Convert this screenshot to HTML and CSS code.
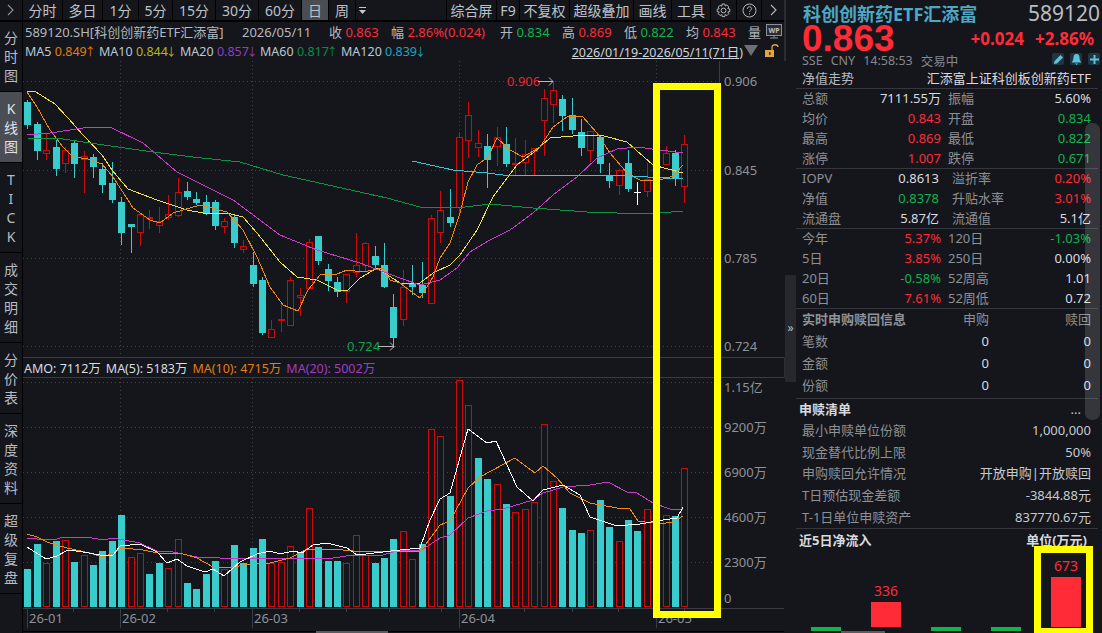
FILE: index.html
```html
<!DOCTYPE html>
<html>
  <head>
    <meta charset="utf-8">
    <title>589120</title>
    <link rel="stylesheet" href="styles.css">
    <script src="chart.js" defer></script>
  </head>
  <body>
    <div id="screen">
      <div id="left">
        <div id="toolbar">
          <div class="tool tool-arrow">
            <svg width="10" height="14" viewBox="0 0 10 14"><path d="M2 2l5 5-5 5" fill="none" stroke="#8a8d94" stroke-width="1.2"/></svg>
          </div>
          <div class="tool w40">分时</div>
          <div class="tool w40">多日</div>
          <div class="tool w36">1分</div>
          <div class="tool w34">5分</div>
          <div class="tool w43">15分</div>
          <div class="tool w43">30分</div>
          <div class="tool w43">60分</div>
          <div class="tool w27 on">日</div>
          <div class="tool w27">周</div>
          <div class="tool w13">
            <svg width="7" height="7" viewBox="0 0 7 7"><path d="M0 3h7L3.500 7z" fill="#c8c8c8"/><path d="M0 .5h7" stroke="#c8c8c8"/></svg>
          </div>
          <div class="tool-space"></div>
          <div class="tool w50">综合屏</div>
          <div class="tool w23">F9</div>
          <div class="tool w50">不复权</div>
          <div class="tool w64">超级叠加</div>
          <div class="tool w38">画线</div>
          <div class="tool w39">工具</div>
          <div class="tool w26">
            <svg width="15" height="15" viewBox="0 0 15 15"><circle cx="7.500" cy="7.500" r="2.400" fill="none" stroke="#b8b8b8"/><path d="M6.200 1h2.600l.4 2 1.700-1 1.900 1.900-1 1.700 2 .4v2.600l-2 .4 1 1.700-1.900 1.900-1.700-1-.4 2H6.200l-.4-2-1.700 1-1.900-1.900 1-1.700-2-.4V6.200l2-.4-1-1.700L4.100 2.200l1.700 1z" fill="none" stroke="#b8b8b8"/></svg>
          </div>
          <div class="tool w25">
            <svg width="15" height="15" viewBox="0 0 15 15"><circle cx="7.500" cy="7.500" r="6.500" fill="none" stroke="#b8b8b8"/><path d="M5.400 5.800c0-1.300 1-2 2.100-2s2.100.7 2.100 1.900c0 1.500-2.100 1.600-2.100 3.200" fill="none" stroke="#b8b8b8"/><path d="M7.500 10.300v1.200" stroke="#b8b8b8"/></svg>
          </div>
          <div class="tool w22">
            <svg width="8" height="12" viewBox="0 0 8 12"><path d="M2 1l5 5-5 5" fill="none" stroke="#b8b8b8" stroke-width="1.100"/></svg>
          </div>
        </div>
        <div id="main">
          <div id="tabs">
            <div class="tab h70">分<br>时<br>图</div>
            <div class="tab h71 on">K<br>线<br>图</div>
            <div class="tab h90">T<br>I<br>C<br>K</div>
            <div class="tab h90">成<br>交<br>明<br>细</div>
            <div class="tab h71">分<br>价<br>表</div>
            <div class="tab h90">深<br>度<br>资<br>料</div>
            <div class="tab h90">超<br>级<br>复<br>盘</div>
          </div>
          <div id="charts">
            <div class="quote">
              <span class="name">589120.SH[科创创新药ETF汇添富]</span>
              <span class="date">2026/05/11</span>
              <span class="q">收 <b class="red">0.863</b></span>
              <span class="q q-wide">幅 <b class="red">2.86%(0.024)</b></span>
              <span class="q">开 <b class="green">0.834</b></span>
              <span class="q">高 <b class="red">0.869</b></span>
              <span class="q">低 <b class="green">0.822</b></span>
              <span class="q">均 <b class="red">0.843</b></span>
              <span class="q q-last">量</span>
              <svg class="wp" width="16" height="16" viewBox="0 0 16 16">
                <rect x=".5" y=".5" width="15" height="11" fill="#2a2c31" stroke="#8d9096"/>
                <text x="8" y="8.500" text-anchor="middle" class="wp-text">WP</text>
                <path d="M4 14h8M8 12v2" stroke="#8d9096"/>
              </svg>
            </div>
            <div class="malist">
              <span class="ma ma-5">MA5 <b class="m5">0.849<i>↑</i></b></span>
              <span class="ma ma-10">MA10 <b class="m10">0.844<i>↓</i></b></span>
              <span class="ma ma-20">MA20 <b class="m20">0.857<i>↓</i></b></span>
              <span class="ma ma-60">MA60 <b class="m60">0.817<i>↑</i></b></span>
              <span class="ma">MA120 <b class="m120">0.839<i>↓</i></b></span>
              <span class="range">2026/01/19-2026/05/11(71日)</span>
              <svg width="14" height="12" viewBox="0 0 14 12"><path d="M0 0h14L7 11z" fill="#6c6f75"/></svg>
              <svg class="lock" width="16" height="14" viewBox="0 0 16 14"><rect x="1" y="6" width="9" height="7" fill="#e3a63c"/><rect x="5" y="8" width="1.500" height="3" fill="#333"/><path d="M8 6V3c0-3 6-3 6 0" fill="none" stroke="#e3a63c" stroke-width="1.300"/></svg>
            </div>
            <svg id="kline" width="763" height="296" viewBox="23 61 763 296"></svg>
            <div class="amo">
              <span>AMO: 7112万</span>
              <span>MA(5): 5183万</span>
              <span class="m5">MA(10): 4715万</span>
              <span class="m20a">MA(20): 5002万</span>
            </div>
            <svg id="volume" width="763" height="255" viewBox="23 378 763 255"></svg>
          </div>
        </div>
      </div>

      <div id="right">
        <div class="title-row">
          <span class="title">科创创新药ETF汇添富</span>
          <span class="code">589120</span>
        </div>
        <div class="price-row">
          <span class="price">0.863</span>
          <span class="change">+0.024</span>
          <span class="change">+2.86%</span>
        </div>
        <div class="status-row">
          <span>SSE</span><span>CNY</span><span>14:58:53</span><span>交易中</span>
          <div class="btns">
            <div class="btn"><svg width="11" height="11" viewBox="0 0 11 11"><path d="M1 10l.6-3L7.500 1l2.500 2.500L4 9.400z" fill="#5fc0de"/></svg></div>
            <div class="btn"><svg width="11" height="11" viewBox="0 0 11 11"><path d="M5.500 0C3 0 2.500 2 2.500 4S1 7.500 .8 8.500h9.400C10 7.500 8.500 6 8.500 4S8 0 5.500 0zM4 9.500h3L5.500 11z" fill="#5fc0de"/></svg></div>
            <div class="btn"><svg width="11" height="11" viewBox="0 0 11 11"><path d="M5.500 1v9M1 5.500h9" stroke="#5fc0de" stroke-width="2"/></svg></div>
          </div>
        </div>

        <div class="head-row"><span>净值走势</span><span class="white">汇添富上证科创板创新药ETF</span></div>

        <div class="stats">
          <span>总额</span><b class="white">7111.55万</b><span>振幅</span><b class="white">5.60%</b>
          <span>均价</span><b class="red">0.843</b><span>开盘</span><b class="green">0.834</b>
          <span>最高</span><b class="red">0.869</b><span>最低</span><b class="green">0.822</b>
          <span>涨停</span><b class="red">1.007</b><span>跌停</span><b class="green">0.671</b>
        </div>
        <div class="stats stats-iopv">
          <span>IOPV</span><b class="white">0.8613</b><span>溢折率</span><b class="red">0.20%</b>
          <span>净值</span><b class="green">0.8378</b><span>升贴水率</span><b class="red">3.01%</b>
          <span>流通盘</span><b class="white">5.87亿</b><span>流通值</span><b class="white">5.1亿</b>
        </div>
        <div class="stats">
          <span>今年</span><b class="red">5.37%</b><span>120日</span><b class="green">-1.03%</b>
          <span>5日</span><b class="red">3.85%</b><span>250日</span><b class="white">0.00%</b>
          <span>20日</span><b class="green">-0.58%</b><span>52周高</span><b class="white">1.01</b>
          <span>60日</span><b class="red">7.61%</b><span>52周低</span><b class="white">0.72</b>
        </div>

        <div class="realtime">
          <strong>实时申购赎回信息</strong><span>申购</span><span>赎回</span>
          <span class="lbl">笔数</span><b class="white">0</b><b class="white">0</b>
          <span class="lbl">金额</span><b class="white">0</b><b class="white">0</b>
          <span class="lbl">份额</span><b class="white">0</b><b class="white">0</b>
        </div>

        <div class="list">
          <div class="list-head"><strong>申赎清单</strong><span>...</span></div>
          <div class="list-row"><span>最小申赎单位份额</span><b>1,000,000</b></div>
          <div class="list-row"><span>现金替代比例上限</span><b>50%</b></div>
          <div class="list-row"><span>申购赎回允许情况</span><b>开放申购|开放赎回</b></div>
          <div class="list-row"><span>T日预估现金差额</span><b>-3844.88元</b></div>
          <div class="list-row"><span>T-1日单位申赎资产</span><b>837770.67元</b></div>
        </div>

        <div class="flow-head"><strong>近5日净流入</strong><strong>单位(万元)</strong></div>
        <div class="flow">
          <div class="flow-col"><div class="down"></div></div>
          <div class="flow-col"><span>336</span><div class="up up336"></div><div class="gap4"></div></div>
          <div class="flow-col"><div class="down"></div></div>
          <div class="flow-col"><div class="down"></div></div>
          <div class="flow-col"><span>673</span><div class="up up673"></div><div class="gap4"></div></div>
        </div>
        <div class="hscroll"></div>
        <div class="vscroll"></div>
        <div class="handle">»</div>
      </div>

      <div class="frame frame-a"></div>
      <div class="frame frame-b"></div>
    </div>
  </body>
</html>
```

FILE: styles.css
```css
* {
    box-sizing: border-box;
}
html, body {
    margin: 0;
    padding: 0;
    background: #14161c;
}
body {
    font-family: "Noto Sans", "Noto Sans CJK SC", sans-serif;
    font-size: 13px;
    color: #b4b8be;
}
b {
    font-weight: normal;
}
i {
    font-style: normal;
}
svg {
    display: block;
}
#screen {
    position: relative;
    display: flex;
    width: 1102px;
    height: 633px;
    overflow: hidden;
}
#left {
    width: 786px;
    flex: none;
    border-right: 2px solid #2b2d32;
}
#toolbar {
    display: flex;
    height: 22px;
    border-bottom: 2px solid #000;
}
.tool {
    display: flex;
    align-items: center;
    justify-content: center;
    height: 20px;
    border-right: 1px solid #000;
    font-size: 14px;
    color: #bcc2ca;
}
.tool.on {
    background: #4b4d55;
}
.tool-arrow {
    width: 23px;
}
.tool-space {
    flex: 1;
    border-right: 1px solid #000;
}
.w13 { width: 13px; border-right: 0; }
.w22 { width: 22px; border-right: 0; }
.w23 { width: 23px; }
.w25 { width: 25px; }
.w26 { width: 26px; }
.w27 { width: 27px; }
.w34 { width: 34px; }
.w36 { width: 36px; }
.w38 { width: 38px; }
.w39 { width: 39px; }
.w40 { width: 40px; }
.w43 { width: 43px; }
.w50 { width: 50px; }
.w64 { width: 64px; }
#main {
    display: flex;
}
#tabs {
    width: 23px;
    flex: none;
    height: 611px;
    border-right: 1px solid #000;
}
.tab {
    display: flex;
    align-items: center;
    justify-content: center;
    text-align: center;
    line-height: 19px;
    font-size: 14px;
    border-bottom: 1px solid #000;
    color: #b8bcc2;
}
.tab.on {
    background: #4b4d55;
    color: #dfe2e6;
}
.h70 { height: 70px; }
.h71 { height: 71px; }
.h90 { height: 90px; }
#charts {
    width: 761px;
}
.quote {
    display: flex;
    align-items: center;
    height: 19px;
    padding-left: 2px;
    white-space: nowrap;
}
.name {
    width: 217px;
}
.date {
    width: 87px;
}
.q {
    width: 62px;
}
.q-wide {
    width: 109px;
}
.q-last {
    width: 18px;
}
.red {
    color: #ff2b37;
}
.green {
    color: #12b34c;
}
.white {
    color: #d8dce0;
}
.wp-text {
    font-size: 7px;
    font-weight: bold;
    fill: #c0c0c0;
}
.malist {
    display: flex;
    align-items: center;
    gap: 6px;
    height: 20px;
    padding-left: 2px;
    font-size: 12.500px;
    white-space: nowrap;
    color: #bac8d4;
}
.ma {
    flex: none;
}
.ma i {
    margin-left: -2px;
    font-size: 11px;
}
.ma-5 { width: 68px; }
.ma-10 { width: 75px; }
.ma-20 { width: 74px; }
.ma-60 { width: 75px; }
.range {
    margin-left: auto;
    margin-right: -5px;
    color: #d0d4d8;
    text-decoration: underline;
    font-size: 12.500px;
}
.lock {
    margin: 0 4px 0 0;
}
.m5 { color: #e67c0e; }
.m10 { color: #b7b41e; }
.m20 { color: #8f3fc0; }
.m20a { color: #a13cc4; }
.m60 { color: #0f8a45; }
.m120 { color: #1ea5c4; }
#kline, #volume {
    background: #14161c;
}
#kline polyline, #volume polyline {
    shape-rendering: crispEdges;
}
.amo {
    display: flex;
    gap: 5px;
    align-items: center;
    height: 21px;
    padding-left: 1px;
    font-size: 12.500px;
    color: #d4dce4;
    border-top: 1px solid #3a3c41;
    border-bottom: 1px solid #3a3c41;
    white-space: nowrap;
}
.axis-text {
    font-size: 13px;
    fill: #8e9196;
}
.mark-text {
    font-size: 13px;
}

#right {
    position: relative;
    flex: 1;
    padding: 0 0 0 10px;
}
.title-row {
    display: flex;
    justify-content: space-between;
    align-items: center;
    height: 26px;
    padding: 0 5px 0 7px;
}
.title {
    font-size: 18px;
    font-weight: bold;
    color: #4da8c4;
}
.code {
    font-size: 21px;
    color: #b9bcc0;
}
.price-row {
    display: flex;
    align-items: center;
    height: 25px;
    padding-left: 6px;
    color: #ff2b37;
}
.price {
    font-family: "Liberation Sans", sans-serif;
    font-size: 37px;
    font-weight: bold;
    line-height: 25px;
    margin-right: 76px;
}
.change {
    font-size: 17px;
    font-weight: bold;
    margin-right: 11px;
}
.status-row {
    display: flex;
    align-items: center;
    gap: 8px;
    height: 18px;
    padding-left: 6px;
    font-size: 12.500px;
    color: #85888e;
}
.btns {
    display: flex;
    gap: 6px;
    margin-left: auto;
    margin-right: 5px;
    padding-bottom: 2px;
}
.btn {
    display: flex;
    align-items: center;
    justify-content: center;
    width: 12px;
    height: 12px;
    background: #1d3641;
    border-radius: 2px;
}
.head-row {
    display: flex;
    justify-content: space-between;
    align-items: center;
    width: 302px;
    height: 20px;
    padding: 0 7px 0 6px;
    border-bottom: 1px solid #34363b;
}
.head-row span, .stats > *, .realtime > *, .list-row > *, .list-head > *, .flow-head > * {
    line-height: 16px;
    padding-bottom: 2px;
}
.stats {
    display: grid;
    grid-template-columns: 68px 71px 72px 78px;
    grid-auto-rows: 20px;
    align-items: center;
    width: 302px;
    height: 80px;
    padding: 0 7px 0 6px;
    border-bottom: 1px solid #34363b;
    color: #8d9095;
}
.stats b {
    text-align: right;
}
.stats span:nth-child(4n+3) {
    padding-left: 7px;
}
.stats-iopv {
    grid-template-columns: 68px 69px 76px 76px;
    height: 60px;
}
.stats-iopv span:nth-child(4n+3) {
    padding-left: 13px;
}
.realtime {
    display: grid;
    grid-template-columns: 140px 47px 102px;
    grid-auto-rows: 22px;
    align-items: center;
    width: 302px;
    height: 90px;
    padding: 0 7px 0 6px;
    border-bottom: 1px solid #34363b;
    text-align: right;
    color: #8d9095;
    white-space: nowrap;
}
.realtime strong {
    text-align: left;
    font-weight: bold;
    color: #8f9297;
}
.realtime .lbl {
    text-align: left;
}
.list {
    width: 302px;
    height: 130px;
    padding: 0 7px 0 3px;
    border-bottom: 1px solid #34363b;
    color: #8d9095;
}
.list-head {
    display: flex;
    justify-content: space-between;
    align-items: center;
    height: 21px;
    padding-right: 10px;
}
.list-head strong, .flow-head strong {
    color: #d8dade;
    font-weight: bold;
}
.list-head span {
    color: #c0c0c0;
}
.list-row {
    display: flex;
    justify-content: space-between;
    align-items: center;
    height: 21.800px;
    padding-left: 3px;
}
.list-row b {
    color: #c6cad0;
}
.flow-head {
    display: flex;
    justify-content: space-between;
    align-items: center;
    width: 302px;
    height: 24px;
    padding: 0 11px 0 3px;
}
.flow {
    display: flex;
    width: 300px;
    height: 78px;
}
.flow-col {
    flex: 1;
    display: flex;
    flex-direction: column;
    justify-content: flex-end;
    align-items: center;
    font-size: 14px;
    color: #ff2b37;
}
.flow-col span {
    line-height: 18px;
    margin-bottom: 2px;
}
.down {
    width: 30px;
    height: 4px;
    background: #12b34c;
}
.up {
    width: 30px;
    background: #ff2b37;
}
.up336 { height: 25px; }
.up673 { height: 50px; }
.gap4 { height: 4px; }
.hscroll {
    position: absolute;
    left: 55px;
    bottom: 0;
    width: 44px;
    height: 2px;
    background: #5a5c62;
}
.vscroll {
    position: absolute;
    left: 299px;
    top: 123px;
    width: 15px;
    height: 297px;
    border-radius: 7px;
    background: rgba(255, 255, 255, .14);
}
.handle {
    position: absolute;
    left: -1px;
    top: 275px;
    width: 11px;
    height: 107px;
    background: #26282d;
    color: #b8bcc2;
    font-size: 12px;
    line-height: 105px;
    text-align: center;
}
.frame {
    position: absolute;
    border: 7px solid #ffff00;
}
.frame-a {
    left: 653px;
    top: 83px;
    width: 68px;
    height: 535px;
}
.frame-b {
    left: 1034px;
    top: 546px;
    width: 59px;
    height: 87px;
    border-bottom-width: 5px;
}
```

FILE: chart.js
```js
var SVG_NS = 'http://www.w3.org/2000/svg';
var BG = '#14161c';
var RED = '#cf0a0a';
var TEAL = '#39cccc';
var GRID = '#3f4248';

// colour, wick top, body top, body bottom, wick bottom (page y)
var candles = [
  ['t',100,102,125,129],['t',122,124,151,160],['r',133,150,153,160],['t',140,147,169,176],
  ['r',147,150,163,173],['t',141,143,164,178],['r',151,156,159,193],['t',154,157,167,178],
  ['t',163,169,185,193],['t',162,183,200,203],['t',197,202,233,245],['t',224,224,227,253],
  ['r',214,214,232,246],['r',210,217,218,229],['r',207,221,225,233],['r',195,214,217,220],
  ['r',178,192,215,217],['t',182,191,197,200],['t',192,199,203,205],['t',195,202,214,215],
  ['t',200,202,226,230],['r',218,221,226,233],['t',215,217,243,248],['r',240,246,249,253],
  ['t',252,265,284,287],['t',277,280,333,335],['r',320,329,337,337],['r',303,319,320,332],
  ['r',277,280,325,325],['r',288,295,297,316],['r',239,242,288,288],['t',236,236,261,265],
  ['t',264,269,281,291],['t',277,282,292,297],['r',274,274,291,303],['r',233,265,272,277],
  ['r',242,243,265,271],['t',246,256,265,270],['t',243,265,287,288],['t',294,307,338,348],
  ['r',270,287,319,326],['t',265,284,287,295],['t',262,285,293,298],['r',215,218,303,303],
  ['r',191,210,232,243],['t',189,217,223,227],['r',132,137,207,215],['r',102,115,140,158],
  ['r',130,143,147,157],['t',134,146,160,188],['r',127,137,146,166],['t',127,144,164,167],
  ['r',138,163,164,175],['r',140,154,162,175],['r',148,148,151,175],['r',89,98,120,156],
  ['r',82,90,104,123],['t',95,99,116,131],['t',98,115,130,134],['t',119,132,148,156],
  ['r',131,131,150,162],['t',135,137,164,173],['t',163,175,181,188],['r',169,170,185,195],
  ['t',150,163,189,192],['w',182,192,192,205],['r',163,179,191,197],['r',165,175,180,190],
  ['r',146,153,164,164],['t',150,153,179,186],['r',135,144,186,203]
];

// colour and page y of the top of each volume bar
var bars = [
  ['t',569],['t',544],['r',563],['t',541],['r',540],['t',562],['r',555],['t',565],['t',551],['t',541],
  ['t',515],['r',557],['r',553],['t',574],['t',563],['r',568],['r',539],['t',583],['t',589],['t',574],
  ['t',561],['r',569],['t',545],['t',563],['t',548],['t',539],['r',563],['r',562],['r',546],['t',553],
  ['r',508],['t',547],['t',561],['t',561],['r',563],['r',535],['r',555],['t',563],['t',558],['t',539],
  ['r',531],['r',559],['t',544],['r',429],['r',436],['t',496],['r',380],['r',405],['t',458],['t',479],
  ['r',484],['t',504],['r',512],['r',509],['r',502],['r',424],['r',481],['t',508],['t',530],['t',533],
  ['r',530],['t',500],['t',527],['r',541],['t',520],['t',531],['r',509],['r',515],['r',515],['t',516],
  ['r',468]
];

var kLines = [
  ['#f0e050', '27,91 36,92 55,104 68,118 83,135 102,155 112,170 128,189 157,200 187,210 203,213 227,213 243,217 257,233 280,262 297,277 317,280 337,290 347,291 360,278 377,268 400,283 420,283 433,273 450,265 460,255 477,230 493,197 517,165 533,153 550,138 573,136 600,135 627,142 653,165 683,173'],
  ['#f08a14', '27,92 37,107 50,130 63,147 73,157 88,159 102,164 113,177 128,200 133,208 150,220 160,223 173,213 200,205 227,212 243,230 257,257 270,287 283,305 298,311 308,290 320,275 337,274 347,270 363,272 383,268 390,280 400,283 420,298 433,277 440,258 450,243 460,213 468,182 477,165 488,157 497,138 510,150 523,157 540,147 553,127 567,117 582,116 597,133 610,153 627,173 640,180 660,180 673,176 683,165'],
  ['#c83cc8', '27,135 50,133 83,128 110,127 143,143 177,172 233,200 280,235 317,250 360,263 400,278 420,285 440,280 457,268 470,252 490,240 510,230 533,213 553,195 577,177 597,158 617,149 637,147 683,153'],
  ['#0e9440', '27,138 63,139 90,143 153,152 193,157 240,162 283,175 387,198 420,207 457,208 490,204 533,208 587,212 647,214 683,211'],
  ['#35c6d8', '412,161 453,170 487,173 503,175 613,175 683,179']
];

var volLines = [
  ['#c83cc8', '27,538 37,539 57,539 63,537 87,537 103,540 113,538 140,543 157,551 173,552 197,557 220,558 300,558 333,558 353,555 383,555 400,550 420,551 440,538 450,535 468,518 487,511 503,509 533,500 543,493 563,487 590,485 608,482 627,492 637,493 653,503 670,509 683,510'],
  ['#f08a14', '27,534 37,537 47,542 67,548 90,553 103,557 113,553 122,548 143,550 163,554 180,553 197,558 213,567 233,567 250,564 270,563 290,558 307,549 333,549 353,551 400,551 420,552 440,525 450,521 468,488 480,477 515,458 535,473 543,466 557,478 570,493 590,503 617,508 630,509 638,521 660,524 673,522 683,516'],
  ['#ffffff', '27,547 46,559 57,556 68,550 83,552 100,555 113,555 120,546 140,544 157,552 167,563 177,559 187,566 205,572 213,569 224,576 240,562 257,554 270,551 280,554 293,551 302,553 313,545 327,543 347,548 357,555 400,550 420,548 430,520 440,499 450,493 468,429 487,443 496,441 517,487 533,501 543,490 563,485 580,495 590,517 617,526 640,524 663,520 677,518 683,507']
];

function el(parent, name, attrs, txt) {
  var node = document.createElementNS(SVG_NS, name);
  for (var k in attrs) node.setAttribute(k, attrs[k]);
  if (txt) node.textContent = txt;
  parent.appendChild(node);
  return node;
}

function xAt(i) {
  return Math.round(27.4 + 9.384 * i);
}

function hline(svg, y, x1, x2, color, dash) {
  el(svg, 'line', {x1: x1, x2: x2, y1: y + .5, y2: y + .5, stroke: color, 'stroke-dasharray': dash || ''});
}

function vline(svg, x, y1, y2, color, dash) {
  el(svg, 'line', {x1: x + .5, x2: x + .5, y1: y1, y2: y2, stroke: color, 'stroke-dasharray': dash || ''});
}

function drawLines(svg, list) {
  list.forEach(function (l) {
    el(svg, 'polyline', {points: l[1], fill: 'none', stroke: l[0], 'stroke-width': 1});
  });
}

function drawKline(svg) {
  [81, 170, 258, 346].forEach(function (y) { hline(svg, y, 23, 719, GRID, '1 3'); });
  [120, 252, 459, 656].forEach(function (x) { vline(svg, x, 61, 357, GRID, '1 3'); });
  vline(svg, 719, 61, 357, '#3a3c41');

  candles.forEach(function (c, i) {
    var x = xAt(i);
    var color = c[0] == 'r' ? RED : c[0] == 't' ? TEAL : '#ffffff';
    vline(svg, x, c[1], c[4], color);
    if (c[0] == 't') {
      el(svg, 'rect', {x: x - 3, y: c[2], width: 7, height: c[3] - c[2], fill: TEAL});
    } else if (c[0] == 'r') {
      el(svg, 'rect', {x: x - 2.5, y: c[2] + .5, width: 6, height: c[3] - c[2], fill: BG, stroke: RED});
    } else {
      hline(svg, c[2], x - 3, x + 4, color);
    }
  });
  drawLines(svg, kLines);

  [['0.906', 81], ['0.845', 170], ['0.785', 258], ['0.724', 346]].forEach(function (t) {
    el(svg, 'text', {x: 724, y: t[1] + 5, 'class': 'axis-text'}, t[0]);
  });

  el(svg, 'text', {x: 507, y: 86, 'class': 'mark-text', fill: '#e02a32'}, '0.906');
  el(svg, 'path', {d: 'M538 81.500h15m-4-4l4 4-4 4', fill: 'none', stroke: '#b8b8b8'});
  el(svg, 'text', {x: 347, y: 351, 'class': 'mark-text', fill: '#12a048'}, '0.724');
  el(svg, 'path', {d: 'M378 346.500h16m-4-4l4 4-4 4', fill: 'none', stroke: '#b8b8b8'});
}

function drawVolume(svg) {
  [382, 427, 472, 517, 562].forEach(function (y) { hline(svg, y, 23, 719, GRID, '1 3'); });
  [120, 252, 459, 656].forEach(function (x) { vline(svg, x, 378, 607, GRID, '1 3'); });
  vline(svg, 719, 378, 608, '#3a3c41');

  bars.forEach(function (b, i) {
    var x = xAt(i);
    if (b[0] == 't') {
      el(svg, 'rect', {x: x - 3, y: b[1], width: 7, height: 607 - b[1], fill: TEAL});
    } else {
      el(svg, 'rect', {x: x - 2.5, y: b[1] + .5, width: 6, height: 606 - b[1], fill: BG, stroke: RED});
    }
  });
  drawLines(svg, volLines);

  [['1.15亿', 392], ['9200万', 432], ['6900万', 477], ['4600万', 522], ['2300万', 567], ['0', 603]].forEach(function (t) {
    el(svg, 'text', {x: 724, y: t[1], 'class': 'axis-text'}, t[0]);
  });

  // time axis
  hline(svg, 608, 23, 784, '#3a3c41');
  [27, 120, 252, 459, 656].forEach(function (x) { vline(svg, x, 608, 628, '#3a3c41'); });
  [73, 167, 214, 299, 346, 389, 441, 524, 572, 618, 684].forEach(function (x) { vline(svg, x, 608, 612, '#3a3c41'); });
  [['26-01', 29], ['26-02', 122], ['26-03', 254], ['26-04', 461], ['26-05', 658]].forEach(function (t) {
    el(svg, 'text', {x: t[1], y: 623, 'class': 'axis-text'}, t[0]);
  });

  // bottom strip
  hline(svg, 631, 23, 784, '#000000');
  el(svg, 'rect', {x: 316, y: 631, width: 72, height: 2, fill: '#5a5c62'});
}

drawKline(document.getElementById('kline'));
drawVolume(document.getElementById('volume'));
```
